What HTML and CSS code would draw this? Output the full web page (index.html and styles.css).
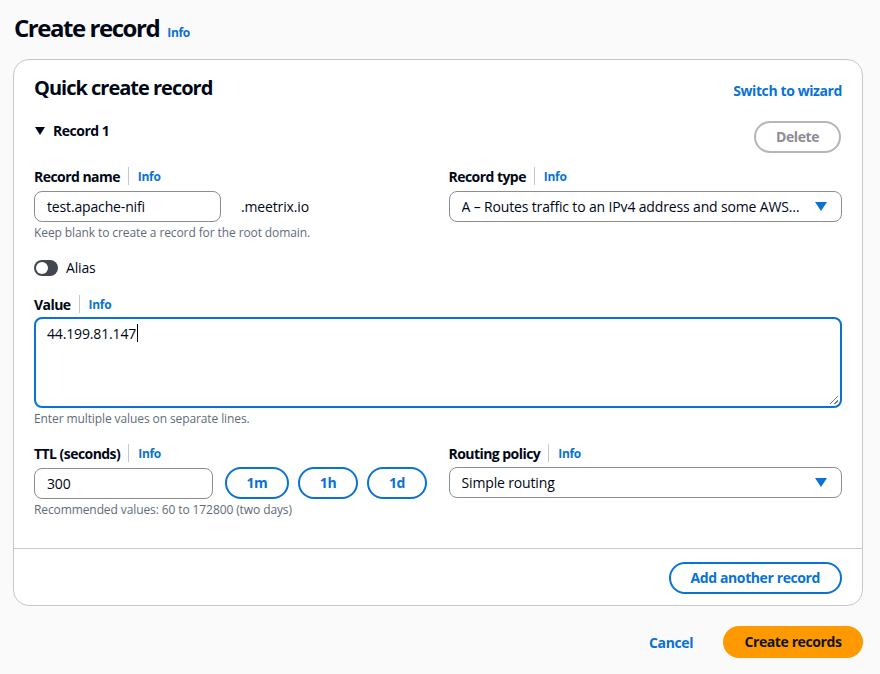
FILE: index.html
```html
<!DOCTYPE html>
<html>
<head>
<meta charset="utf-8">
<link rel="stylesheet" href="styles.css">
</head>
<body>
<div class="page">
  <div class="page-header">
    <h1 class="page-title">Create record</h1>
    <a class="info">Info</a>
  </div>

  <div class="card">
    <div class="card-body">
      <div class="card-head">
        <h2 class="card-title">Quick create record</h2>
        <a class="link">Switch to wizard</a>
      </div>

      <div class="record-head">
        <div class="expander"><span class="caret"></span><span>Record 1</span></div>
        <button class="btn btn-disabled">Delete</button>
      </div>

      <div class="grid2">
        <div class="field">
          <div class="label"><span>Record name</span><span class="sep"></span><a class="info">Info</a></div>
          <div class="name-row">
            <div class="input name-input">test.apache-nifi</div>
            <span class="suffix">.meetrix.io</span>
          </div>
          <div class="hint">Keep blank to create a record for the root domain.</div>
        </div>
        <div class="field">
          <div class="label"><span>Record type</span><span class="sep"></span><a class="info">Info</a></div>
          <div class="select"><span class="select-text">A – Routes traffic to an IPv4 address and some AWS…</span><span class="arrow"></span></div>
        </div>
      </div>

      <div class="toggle-row">
        <span class="toggle"><span class="knob"></span></span>
        <span>Alias</span>
      </div>

      <div class="field">
        <div class="label"><span>Value</span><span class="sep"></span><a class="info">Info</a></div>
        <div class="textarea"><span>44.199.81.147</span><span class="cursor"></span><span class="resize"></span></div>
        <div class="hint">Enter multiple values on separate lines.</div>
      </div>

      <div class="grid2 ttl-grid">
        <div class="field">
          <div class="label"><span>TTL (seconds)</span><span class="sep"></span><a class="info">Info</a></div>
          <div class="ttl-row">
            <div class="input ttl-input">300</div>
            <button class="btn btn-normal small w64">1m</button>
            <button class="btn btn-normal small">1h</button>
            <button class="btn btn-normal small">1d</button>
          </div>
          <div class="hint">Recommended values: 60 to 172800 (two days)</div>
        </div>
        <div class="field">
          <div class="label"><span>Routing policy</span><span class="sep"></span><a class="info">Info</a></div>
          <div class="select policy-select"><span class="select-text">Simple routing</span><span class="arrow"></span></div>
        </div>
      </div>
    </div>
    <div class="card-foot">
      <button class="btn btn-normal">Add another record</button>
    </div>
  </div>

  <div class="actions">
    <a class="link cancel">Cancel</a>
    <button class="btn btn-primary">Create records</button>
  </div>
</div>
</body>
</html>
```

FILE: styles.css
```css
* { box-sizing: border-box; }
html, body { margin: 0; padding: 0; }
body {
  background: #fafafa;
  font-family: "Open Sans", "Noto Sans", sans-serif;
  color: #000716;
  font-size: 14px;
  letter-spacing: -0.15px;
}
.page { padding: 12px 18px 0 13px; }
.page-header { display: flex; align-items: baseline; gap: 8px; padding-left: 1px; }
.page-title { margin: 0; font-size: 24px; font-weight: 700; line-height: 32px; letter-spacing: -1.45px; }
.info { color: #0972d3; font-size: 12px; font-weight: 700; text-decoration: none; letter-spacing: -0.3px; }
.link { color: #0972d3; font-size: 14px; font-weight: 700; letter-spacing: -0.4px; }

.card {
  margin-top: 15px;
  background: #fff;
  border: 1px solid #c6c6cd;
  border-radius: 16px;
  width: 850px;
}
.card-body { padding: 14px 20px 30px 20px; }
.card-head { display: flex; justify-content: space-between; align-items: flex-end; }
.card-title { margin: 0; font-size: 20px; font-weight: 700; line-height: 28px; letter-spacing: -1px; }
.card-head .link { margin-bottom: 2px; margin-right: 0; }

.record-head { display: flex; justify-content: space-between; align-items: flex-start; margin-top: 8px; }
.expander { display: flex; align-items: center; gap: 8px; font-weight: 700; font-size: 14px; padding-top: 11px; letter-spacing: -0.5px; }
.caret { width: 0; height: 0; border-left: 5px solid transparent; border-right: 5px solid transparent; border-top: 8px solid #000716; margin-left: 1px; }

.btn {
  font-family: inherit;
  font-weight: 700;
  font-size: 14px;
  border-radius: 20px;
  height: 32px;
  padding: 0 20px;
  background: #fff;
  cursor: pointer;
  line-height: 1;
  white-space: nowrap;
  letter-spacing: -0.4px;
}
.btn-disabled { border: 2px solid #b4b4bb; color: #8c8c94; width: 87px; margin-top: 11px; margin-right: 1px; }
.btn-normal { border: 2px solid #0972d3; color: #0972d3; }
.btn-primary { background: #ff9900; border: 2px solid #ff9900; color: #0f141a; width: 140px; padding: 0; }
.small { width: 60px; padding: 0; }
.small.w64 { width: 64px; }

.grid2 { display: grid; grid-template-columns: minmax(0, 1fr) minmax(0, 1fr); column-gap: 21px; margin-top: 12px; }
.field { display: flex; flex-direction: column; }
.label { display: flex; align-items: center; font-weight: 700; font-size: 14px; height: 22px; letter-spacing: -0.55px; }
.sep { width: 1px; height: 18px; background: #c6c6cd; margin: 0 9px 0 8px; }
.input, .select, .textarea {
  border: 1px solid #8c8c94;
  border-radius: 8px;
  height: 31px;
  padding: 0 12px;
  display: flex;
  align-items: center;
  font-size: 14px;
  background: #fff;
}
.label + * { margin-top: 4px; }
.label + .textarea { margin-top: 2px; }
.label + .ttl-row, .label + .policy-select { margin-top: 3px; }
.name-row { display: flex; align-items: center; }
.name-input { width: 187px; }
.suffix { margin-left: 20px; }
.hint { color: #5f6b7a; font-size: 12px; margin-top: 3px; line-height: 16px; letter-spacing: -0.1px; }
.select { justify-content: space-between; }
.select-text { white-space: nowrap; overflow: hidden; }
.arrow { width: 0; height: 0; border-left: 6px solid transparent; border-right: 6px solid transparent; border-top: 9px solid #0972d3; margin-right: 2px; }

.toggle-row { display: flex; align-items: center; gap: 8px; margin: 17px 0 16px; }
.toggle { width: 24px; height: 16px; border-radius: 8px; background: #424650; position: relative; }
.knob { position: absolute; left: 2px; top: 2px; width: 12px; height: 12px; border-radius: 50%; background: #fff; }

.textarea {
  height: 91px;
  border: 2px solid #0972d3;
  align-items: flex-start;
  padding: 5px 11px;
  position: relative;
}
.cursor { display: inline-block; width: 1px; height: 18px; background: #000; margin-left: 1px; }
.resize { position: absolute; right: 2px; bottom: 2px; width: 8px; height: 8px;
  background: linear-gradient(135deg, transparent 45%, #777 45%, #777 55%, transparent 55%, transparent 75%, #777 75%, #777 85%, transparent 85%); }

.ttl-grid { margin-top: 15px; }
.ttl-row { display: flex; align-items: center; gap: 9px; }
.ttl-input { width: 179px; margin-right: 3px; }

.card-foot { border-top: 1px solid #c6c6cd; padding: 13px 20px 11px; display: flex; justify-content: flex-end; }

.actions { display: flex; justify-content: flex-end; align-items: center; gap: 30px; margin-top: 20px; width: 850px; }
.cancel { text-decoration: none; }
```
